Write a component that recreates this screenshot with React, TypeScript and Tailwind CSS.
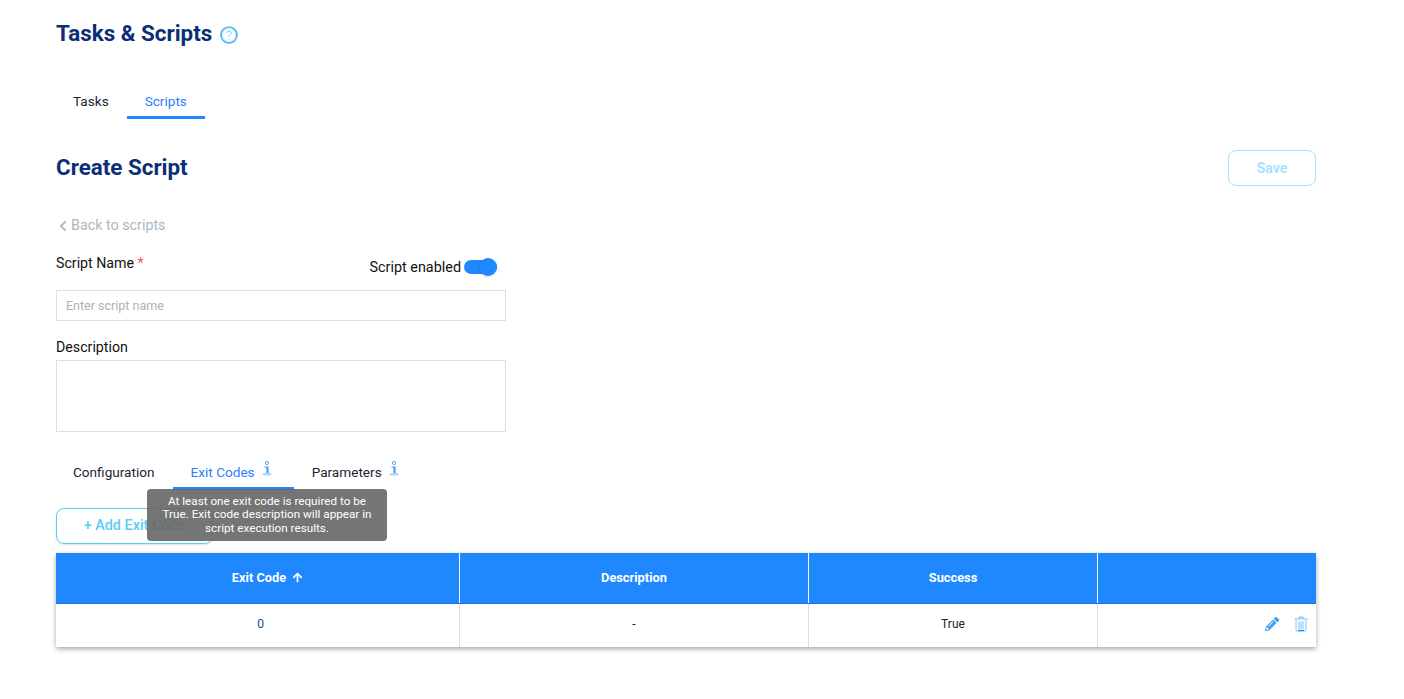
import React from 'react'
import { FaArrowUp, FaChevronLeft, FaPencilAlt } from 'react-icons/fa'

function InfoIcon() {
  return (
    <svg width="10" height="15" viewBox="0 0 10 15" className="text-[#3f9cf5]" fill="none">
      <circle cx="5" cy="2" r="1.6" stroke="currentColor" strokeWidth="0.9" />
      <path d="M2.5 6h3.5v6M5 6v6M1 13.2h8" stroke="currentColor" strokeWidth="1.1" />
      <rect x="0.8" y="12.2" width="8.4" height="2.2" fill="#a9d4fb" />
    </svg>
  )
}

function HelpIcon() {
  return (
    <svg width="18" height="18" viewBox="0 0 18 18" fill="none">
      <circle cx="9" cy="9" r="8" stroke="#4db5f5" strokeWidth="1.6" />
      <circle cx="9" cy="9" r="6.6" stroke="#bfe4fb" strokeWidth="0.8" />
      <path d="M6.8 7.2a2.2 2.2 0 1 1 3.4 1.8c-.8.5-1.2 1-1.2 2" stroke="#6cc0f6" strokeWidth="0.9" />
      <circle cx="9" cy="13" r="0.6" fill="#6cc0f6" />
    </svg>
  )
}

function TrashIcon() {
  return (
    <svg width="14" height="16" viewBox="0 0 14 16" fill="none">
      <path d="M0.5 3h13M5 3V1h4v2" stroke="#5cbcf7" strokeWidth="1" />
      <path d="M2 3.5v10.8c0 .6.4 1 1 1h8c.6 0 1-.4 1-1V3.5" fill="#eef8ff" stroke="#8fd0f9" strokeWidth="1" />
      <path d="M5 5.5v8M7 5.5v8M9 5.5v8" stroke="#8cc4fa" strokeWidth="1" />
      <path d="M4 14.5h6" stroke="#1f86ff" strokeWidth="1" />
    </svg>
  )
}

function Tab({ label, active, info }: { label: string; active?: boolean; info?: boolean }) {
  return (
    <div className={`relative flex h-[37px] items-center px-[18px] pt-px text-[13.6px] ${active ? 'text-[#2a7fff]' : 'text-[#1d2433]'}`}>
      {label}
      {info && (
        <span className="mb-[7px] ml-[7px] mr-[4px] flex">
          <InfoIcon />
        </span>
      )}
      {active && <span className="absolute inset-x-0 bottom-0 h-[3px] bg-[#2088ff]" />}
    </div>
  )
}

export default function App() {
  return (
    <div className="h-[699px] w-[1404px] overflow-hidden bg-white pl-14 font-['Roboto',sans-serif] text-[#111]">
      <div className="w-[1260px]">
        <div className="flex h-[66px] items-center gap-[8px] pt-px">
          <h1 className="text-[22.4px] font-bold text-[#0b2f77]">Tasks &amp; Scripts</h1>
          <span className="mt-[2px]"><HelpIcon /></span>
        </div>

        <div className="-ml-px mt-[16px] flex">
          <Tab label="Tasks" />
          <Tab label="Scripts" active />
        </div>

        <div className="mt-[31px] flex items-center justify-between">
          <h2 className="text-[22.4px] font-bold text-[#0b2f77]">Create Script</h2>
          <button className="h-9 w-[88px] rounded-lg border border-[#a5e3ff] text-sm font-bold text-[#a5e3ff]">Save</button>
        </div>

        <div className="mt-[29px] flex items-center gap-[2px] text-[14.3px] text-[#a9b9c4]">
          <FaChevronLeft size={12} className="ml-px" />
          Back to scripts
        </div>

        <div className="w-[450px]">
          <div className="mt-[17px] flex h-[24px] justify-between text-[14.2px]">
            <span>Script Name <span className="text-[#f55]">*</span></span>
            <div className="mr-[9px] mt-[5px] flex items-center gap-[3px] text-[14.4px]">
              Script enabled
              <span className="relative mb-[2px] block h-[14px] w-[33px] rounded-full bg-[#2088ff]">
                <span className="absolute right-0 top-[-2px] h-[18px] w-[18px] rounded-full bg-[#2088ff] shadow" />
              </span>
            </div>
          </div>
          <input
            placeholder="Enter script name"
            className="mt-[13px] h-[31px] w-full border border-[#dedede] px-[9px] text-[12.5px] outline-none placeholder:text-[#a9b3ba]"
          />
          <div className="mt-[16px] text-[14.2px]">Description</div>
          <textarea className="mt-px block h-[72px] w-full resize-none border border-[#dedede] outline-none" />
        </div>

        <div className="relative -ml-px mt-[21px] flex">
          <Tab label="Configuration" />
          <Tab label="Exit Codes" active info />
          <Tab label="Parameters" info />
          <div className="absolute left-[92px] top-[36px] z-10 w-[240px] rounded bg-[#666]/90 px-2 pt-[6px] pb-[6px] text-center text-[11.7px] leading-[13.5px] text-white">
            At least one exit code is required to be True. Exit code description will appear in script execution results.
          </div>
        </div>

        <button className="mt-[18px] h-9 w-[157px] rounded-lg border border-[#5ccbf8] text-[14.4px] font-medium text-[#5ccbf8] shadow-sm">+ Add Exit Code</button>

        <div className="mt-[9px] shadow-[0_2px_5px_rgba(0,0,0,0.35)]">
          <div className="grid h-[51px] grid-cols-[404px_349px_289px_1fr] border-b border-[#1b78e0] bg-[#2088ff] text-[12.8px] font-bold text-white">
            <div className="flex items-center justify-center gap-[6px] border-r border-white pl-[20px]">
              Exit Code <FaArrowUp size={11} />
            </div>
            <div className="flex items-center justify-center border-r border-white">Description</div>
            <div className="flex items-center justify-center border-r border-white">Success</div>
            <div />
          </div>
          <div className="grid h-[43px] grid-cols-[404px_349px_289px_1fr] bg-white pb-[3px] text-xs text-[#222]">
            <div className="-mb-[3px] flex items-center justify-center border-r border-[#dedede] pb-[3px] pl-[6px] text-[#0b4f8f]">0</div>
            <div className="-mb-[3px] flex items-center justify-center border-r border-[#dedede] pb-[3px]">-</div>
            <div className="-mb-[3px] flex items-center justify-center border-r border-[#dedede] pb-[3px]">True</div>
            <div className="flex items-center justify-end gap-[15px] pr-2">
              <FaPencilAlt size={14} className="text-[#3ea3f8]" />
              <TrashIcon />
            </div>
          </div>
        </div>
      </div>
    </div>
  )
}
